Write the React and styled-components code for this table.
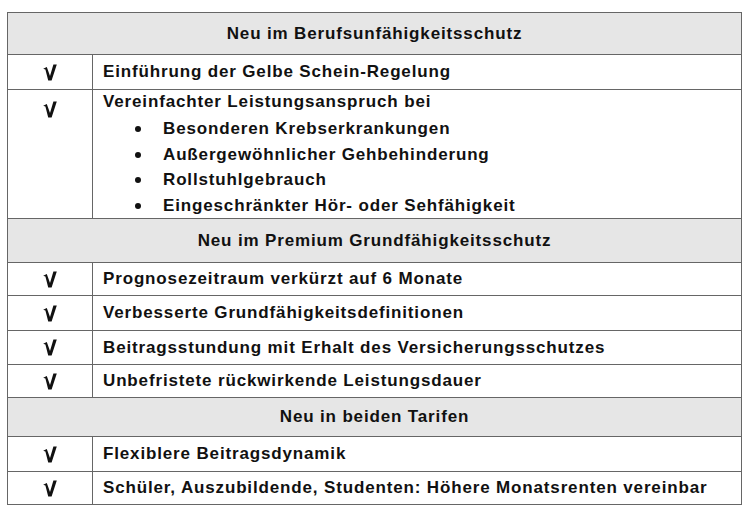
import React from 'react';
import styled, { createGlobalStyle } from 'styled-components';

const GlobalStyle = createGlobalStyle`
  html, body {
    margin: 0;
    padding: 0;
    background: #ffffff;
  }
  body {
    font-family: 'Liberation Sans', Arial, sans-serif;
    color: #111;
  }
`;

const Page = styled.div`
  width: 750px;
  height: 512px;
  padding: 12px 0 0 7px;
  box-sizing: border-box;
`;

const Table = styled.table`
  width: 735px;
  border-collapse: collapse;
  table-layout: fixed;
  font-size: 17px;
  font-weight: bold;
  letter-spacing: 0.85px;
  line-height: 20px;

  td {
    border: 1px solid #666;
    padding: 0;
  }
`;

const HeaderCell = styled.td`
  background: #e6e6e6;
  text-align: center;
  height: ${(p) => p.h}px;
  box-sizing: border-box;
`;

const CheckCell = styled.td`
  width: 85px;
  text-align: center;
  vertical-align: ${(p) => (p.top ? 'top' : 'middle')};
  padding-top: ${(p) => (p.top ? '11px' : '0')} !important;
  height: ${(p) => p.h}px;
  box-sizing: border-box;
  line-height: 0;
`;

const TextCell = styled.td`
  padding-left: 10px !important;
  vertical-align: ${(p) => (p.top ? 'top' : 'middle')};
`;

const FirstLine = styled.div`
  line-height: 24px;
`;

const BulletList = styled.ul`
  margin: 2px 0 0 0;
  padding: 0 0 0 60px;
  list-style: none;
`;

const Bullet = styled.li`
  position: relative;
  line-height: 25.5px;

  &::before {
    content: '';
    position: absolute;
    left: -28px;
    top: 10px;
    width: 6px;
    height: 6px;
    border-radius: 50%;
    background: #111;
  }
`;

const CheckIcon = styled.svg`
  width: 14px;
  height: 17px;
  display: inline-block;
`;

const Check = () => (
  <CheckIcon viewBox="0 0 14 17">
    <path d="M0.2 4.8 L3.8 3 L7 12 L10.4 0.6 L13.8 0.6 L8.6 16.6 L5.2 16.6 L2.4 5.4 Z" fill="#111" />
  </CheckIcon>
);

const sections = [
  {
    title: 'Neu im Berufsunfähigkeitsschutz',
    h: 42,
    rows: [
      { text: 'Einführung der Gelbe Schein-Regelung', h: 35 },
      {
        text: 'Vereinfachter Leistungsanspruch bei',
        h: 129,
        bullets: [
          'Besonderen Krebserkrankungen',
          'Außergewöhnlicher Gehbehinderung',
          'Rollstuhlgebrauch',
          'Eingeschränkter Hör- oder Sehfähigkeit',
        ],
      },
    ],
  },
  {
    title: 'Neu im Premium Grundfähigkeitsschutz',
    h: 44,
    rows: [
      { text: 'Prognosezeitraum verkürzt auf 6 Monate', h: 33 },
      { text: 'Verbesserte Grundfähigkeitsdefinitionen', h: 35 },
      { text: 'Beitragsstundung mit Erhalt des Versicherungsschutzes', h: 34 },
      { text: 'Unbefristete rückwirkende Leistungsdauer', h: 33 },
    ],
  },
  {
    title: 'Neu in beiden Tarifen',
    h: 39,
    rows: [
      { text: 'Flexiblere Beitragsdynamik', h: 35 },
      { text: 'Schüler, Auszubildende, Studenten: Höhere Monatsrenten vereinbar', h: 33 },
    ],
  },
];

export default function App() {
  return (
    <Page>
      <GlobalStyle />
      <Table>
        <colgroup>
          <col style={{ width: 85 }} />
          <col />
        </colgroup>
        <tbody>
          {sections.map((s) => (
            <React.Fragment key={s.title}>
              <tr>
                <HeaderCell colSpan={2} h={s.h}>
                  {s.title}
                </HeaderCell>
              </tr>
              {s.rows.map((r) => (
                <tr key={r.text}>
                  <CheckCell h={r.h} top={!!r.bullets}>
                    <Check />
                  </CheckCell>
                  <TextCell top={!!r.bullets}>
                    {r.bullets ? <FirstLine>{r.text}</FirstLine> : r.text}
                    {r.bullets && (
                      <BulletList>
                        {r.bullets.map((b) => (
                          <Bullet key={b}>{b}</Bullet>
                        ))}
                      </BulletList>
                    )}
                  </TextCell>
                </tr>
              ))}
            </React.Fragment>
          ))}
        </tbody>
      </Table>
    </Page>
  );
}
